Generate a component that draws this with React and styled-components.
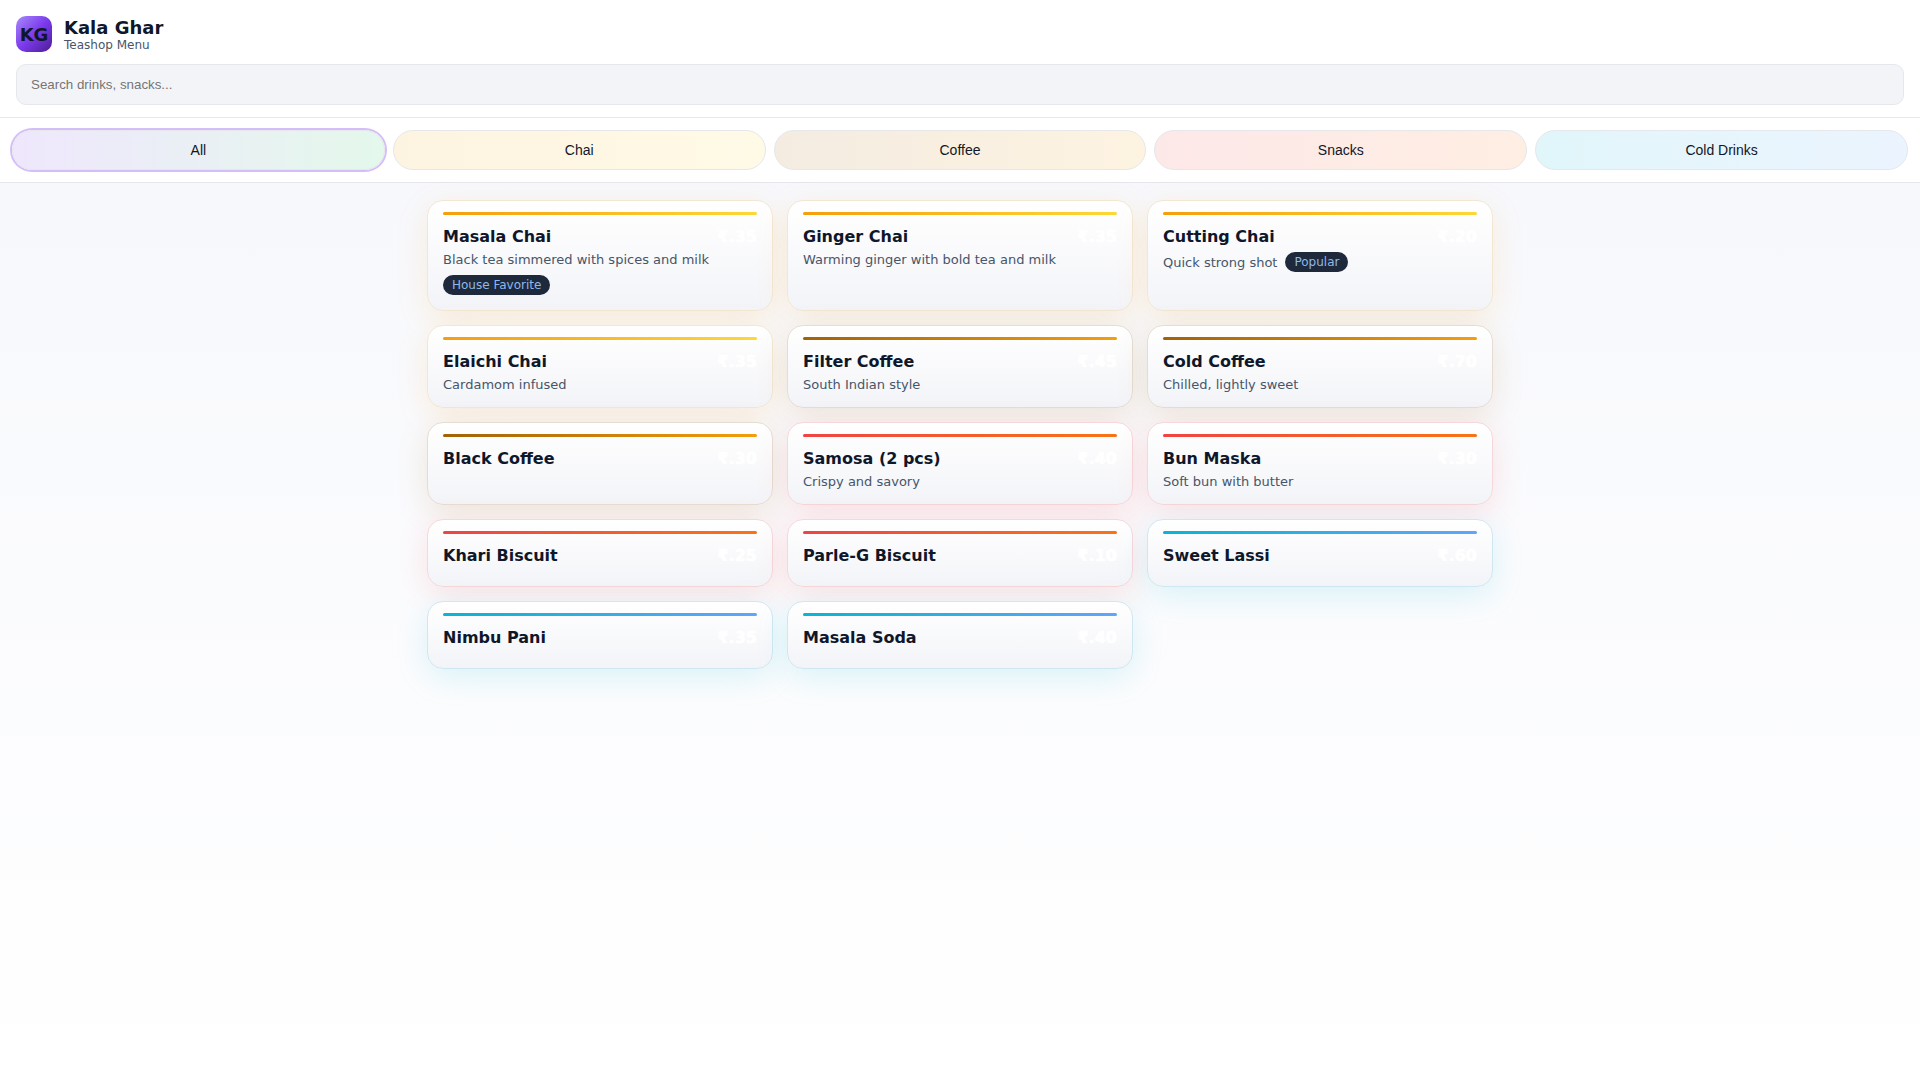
import React, { useState } from "react";
import styled, { createGlobalStyle } from "styled-components";

const Global = createGlobalStyle`
  html, body { margin: 0; padding: 0; }
  body {
    min-height: 100vh;
    background: #fff;
    font-family: "DejaVu Sans", sans-serif;
    color: #0f172a;
  }
`;

const themes = {
  all: { from: "124, 58, 237", to: "34, 197, 94" },
  chai: { from: "245, 158, 11", to: "253, 216, 53", edge: "#f3e7d2" },
  coffee: { from: "161, 98, 7", to: "245, 158, 11", edge: "#e5ddd1" },
  snacks: { from: "239, 68, 68", to: "249, 115, 22", edge: "#f6d7da" },
  cold: { from: "6, 182, 212", to: "96, 165, 250", edge: "#cfe7f0" },
};

const Page = styled.div`
  min-height: 100vh;
  display: flex;
  flex-direction: column;
`;

const Header = styled.header`
  background: #fff;
  padding: 16px 16px 12px;
  border-bottom: 1px solid #e5e7eb;
`;

const Brand = styled.div`
  display: flex;
  align-items: center;
  gap: 12px;
  margin-bottom: 12px;
`;

const Logo = styled.div`
  width: 36px;
  height: 36px;
  border-radius: 10px;
  background: linear-gradient(135deg, #a78bfa 0%, #7c3aed 50%, #4c1d95 100%);
  display: flex;
  align-items: center;
  justify-content: center;
  font-weight: 700;
  font-size: 18px;
  color: #0f172a;
`;

const BrandText = styled.div`
  display: flex;
  flex-direction: column;
`;

const Title = styled.h1`
  margin: 0;
  font-size: 18px;
  line-height: 21px;
  font-weight: 700;
  color: #0f172a;
`;

const Subtitle = styled.div`
  font-size: 12px;
  line-height: 14px;
  color: #475569;
`;

const Search = styled.input`
  display: block;
  box-sizing: border-box;
  width: 100%;
  height: 41px;
  padding: 0 14px;
  background: #f3f4f8;
  border: 1px solid #e5e7eb;
  border-radius: 10px;
  font-family: "Liberation Sans", Arial, sans-serif;
  font-size: 13.33px;
  color: #0f172a;
  outline: none;

  &::placeholder {
    color: #757575;
  }
`;

const Tabs = styled.nav`
  display: grid;
  grid-template-columns: repeat(5, 1fr);
  gap: 8px;
  padding: 12px;
  background: #fff;
  border-bottom: 1px solid #e5e7eb;
`;

const Tab = styled.button`
  height: 40px;
  border-radius: 999px;
  border: 1px solid #e5e7eb;
  background: linear-gradient(
    90deg,
    rgba(${(p) => p.$theme.from}, 0.12),
    rgba(${(p) => p.$theme.to}, 0.12)
  );
  font-family: "Liberation Sans", Arial, sans-serif;
  font-size: 14px;
  color: #0f172a;
  cursor: pointer;
  box-shadow: ${(p) => (p.$active ? "0 0 0 2px rgba(124, 58, 237, 0.33)" : "none")};
`;

const Main = styled.main`
  flex: 1;
  padding: 17px 0;
  background: linear-gradient(180deg, #f7f8fc 0%, #ffffff 100%);
`;

const Grid = styled.div`
  max-width: 1066px;
  margin: 0 auto;
  display: grid;
  grid-template-columns: repeat(3, 1fr);
  gap: 14px;
`;

const Card = styled.article`
  padding: 11px 15px 15px;
  border-radius: 16px;
  border: 1px solid ${(p) => p.$theme.edge};
  background: linear-gradient(180deg, #ffffff 0%, #f3f4f8 100%);
  box-shadow: 0 8px 32px rgba(${(p) => p.$theme.from}, 0.14);
`;

const Accent = styled.div`
  height: 3px;
  margin-bottom: 12px;
  border-radius: 2px;
  background: linear-gradient(
    90deg,
    rgb(${(p) => p.$theme.from}),
    rgb(${(p) => p.$theme.to})
  );
`;

const CardTop = styled.div`
  display: flex;
  justify-content: space-between;
  align-items: center;
  margin-bottom: 6px;
`;

const Name = styled.h3`
  margin: 0;
  font-size: 16px;
  line-height: 19px;
  font-weight: 700;
  color: #0f172a;
`;

const Price = styled.span`
  font-size: 16px;
  line-height: 19px;
  font-weight: 700;
  color: #ffffff;
  text-shadow: 0 0 2px #ffffff, 0 0 1px #ffffff;
`;

const Details = styled.div`
  display: flex;
  flex-wrap: wrap;
  align-items: center;
  gap: 8px;
`;

const Desc = styled.p`
  margin: 0;
  font-size: 13px;
  line-height: 15px;
  color: #475569;
`;

const Badge = styled.span`
  display: inline-block;
  padding: 0 9px;
  height: 20px;
  line-height: 20px;
  border-radius: 999px;
  background: #1e293b;
  color: #8fb8ea;
  font-size: 12px;
`;

const tabs = [
  { id: "all", label: "All" },
  { id: "chai", label: "Chai" },
  { id: "coffee", label: "Coffee" },
  { id: "snacks", label: "Snacks" },
  { id: "cold", label: "Cold Drinks" },
];

const items = [
  { name: "Masala Chai", price: 35, cat: "chai", desc: "Black tea simmered with spices and milk", badge: "House Favorite" },
  { name: "Ginger Chai", price: 35, cat: "chai", desc: "Warming ginger with bold tea and milk" },
  { name: "Cutting Chai", price: 20, cat: "chai", desc: "Quick strong shot", badge: "Popular" },
  { name: "Elaichi Chai", price: 35, cat: "chai", desc: "Cardamom infused" },
  { name: "Filter Coffee", price: 45, cat: "coffee", desc: "South Indian style" },
  { name: "Cold Coffee", price: 70, cat: "coffee", desc: "Chilled, lightly sweet" },
  { name: "Black Coffee", price: 30, cat: "coffee" },
  { name: "Samosa (2 pcs)", price: 40, cat: "snacks", desc: "Crispy and savory" },
  { name: "Bun Maska", price: 30, cat: "snacks", desc: "Soft bun with butter" },
  { name: "Khari Biscuit", price: 25, cat: "snacks" },
  { name: "Parle-G Biscuit", price: 10, cat: "snacks" },
  { name: "Sweet Lassi", price: 60, cat: "cold" },
  { name: "Nimbu Pani", price: 35, cat: "cold" },
  { name: "Masala Soda", price: 40, cat: "cold" },
];

export default function App() {
  const [active, setActive] = useState("all");
  const [query, setQuery] = useState("");

  const visible = items.filter(
    (i) =>
      (active === "all" || i.cat === active) &&
      i.name.toLowerCase().includes(query.toLowerCase())
  );

  return (
    <Page>
      <Global />
      <Header>
        <Brand>
          <Logo>KG</Logo>
          <BrandText>
            <Title>Kala Ghar</Title>
            <Subtitle>Teashop Menu</Subtitle>
          </BrandText>
        </Brand>
        <Search
          placeholder="Search drinks, snacks..."
          value={query}
          onChange={(e) => setQuery(e.target.value)}
        />
      </Header>
      <Tabs>
        {tabs.map((t) => (
          <Tab
            key={t.id}
            $theme={themes[t.id]}
            $active={active === t.id}
            onClick={() => setActive(t.id)}
          >
            {t.label}
          </Tab>
        ))}
      </Tabs>
      <Main>
        <Grid>
          {visible.map((i) => (
            <Card key={i.name} $theme={themes[i.cat]}>
              <Accent $theme={themes[i.cat]} />
              <CardTop>
                <Name>{i.name}</Name>
                <Price>₹.{i.price}</Price>
              </CardTop>
              {(i.desc || i.badge) && (
                <Details>
                  {i.desc && <Desc>{i.desc}</Desc>}
                  {i.badge && <Badge>{i.badge}</Badge>}
                </Details>
              )}
            </Card>
          ))}
        </Grid>
      </Main>
    </Page>
  );
}
